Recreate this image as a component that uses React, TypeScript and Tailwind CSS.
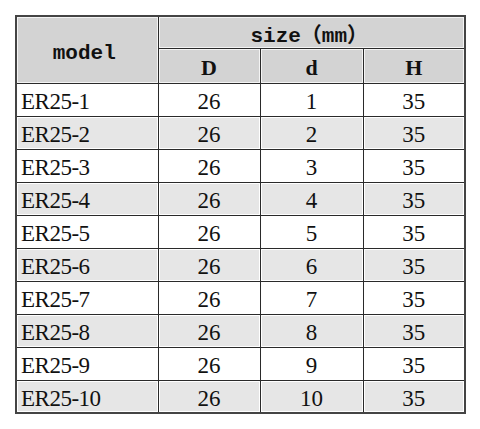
const rows = Array.from({ length: 10 }, (_, i) => ({
  model: `ER25-${i + 1}`,
  D: 26,
  d: i + 1,
  H: 35,
}));

const head = "font-['Liberation_Mono',monospace] font-bold text-[21px] text-[#111]";
const headSerif = "font-['Liberation_Serif',serif] font-bold text-[22px] text-[#111]";
const cell = "border border-[#2a2a2a] p-0";
const grayCell = "bg-[#d3d3d3] shadow-[inset_0_0_0_1px_#f4f4f4]";
const cjk = "font-['Noto_Sans_CJK_SC',sans-serif] font-bold";

export default function App() {
  return (
    <div className="w-[480px] h-[429px] bg-white pt-[15px] pl-[15px]">
      <table className="table-fixed border-collapse border-2 border-[#444] w-[449px] font-['Liberation_Serif',serif] text-[23px] text-[#111] leading-none">
        <colgroup>
          <col className="w-[142px]" />
          <col className="w-[102px]" />
          <col className="w-[103px]" />
          <col className="w-[102px]" />
        </colgroup>
        <thead>
          <tr className="h-[32px]">
            <th rowSpan={2} className={`${cell} ${grayCell} ${head} align-middle pt-[8px] pr-[6px]`}>
              model
            </th>
            <th colSpan={3} className={`${cell} ${grayCell} ${head} pt-[6px] pr-[4px]`}>
              size<span className={cjk}>（</span>mm<span className={cjk}>）</span>
            </th>
          </tr>
          <tr className="h-[35px]">
            <th className={`${cell} ${grayCell} ${headSerif} pt-[4px]`}>D</th>
            <th className={`${cell} ${grayCell} ${headSerif} pt-[4px]`}>d</th>
            <th className={`${cell} ${grayCell} ${headSerif} pt-[4px]`}>H</th>
          </tr>
        </thead>
        <tbody>
          {rows.map((r, i) => {
            const bg = i % 2 === 1 ? "bg-[#e6e6e6] shadow-[inset_0_0_0_1px_#ffffff]" : "bg-white";
            return (
              <tr key={r.model} className="h-[33px]">
                <td className={`${cell} ${bg} text-left pl-[4px] pt-[4px] tracking-[-0.5px]`}>{r.model}</td>
                <td className={`${cell} ${bg} text-center pt-[4px]`}>{r.D}</td>
                <td className={`${cell} ${bg} text-center pt-[4px]`}>{r.d}</td>
                <td className={`${cell} ${bg} text-center pt-[4px]`}>{r.H}</td>
              </tr>
            );
          })}
        </tbody>
      </table>
    </div>
  );
}
